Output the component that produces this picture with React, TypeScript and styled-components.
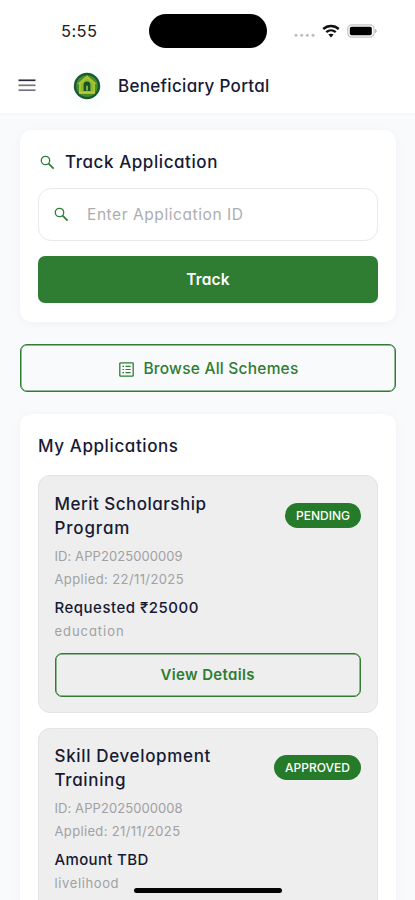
import React from "react";
import styled, { createGlobalStyle } from "styled-components";

const GREEN = "#2e7d32";
const NAVY = "#161a35";

const GlobalStyle = createGlobalStyle`
  * { box-sizing: border-box; }
  html, body { margin: 0; padding: 0; overflow: hidden; }
  body { font-family: Inter, "Open Sans", sans-serif; font-feature-settings: "cv11"; }
  button, input { font: inherit; font-feature-settings: inherit; }
`;

const Screen = styled.div`
  position: relative;
  width: 415px;
  height: 900px;
  overflow: hidden;
  background: #f9fafc;
  display: flex;
  flex-direction: column;
`;

const StatusBar = styled.div`
  flex: none;
  height: 58px;
  background: #fff;
  display: grid;
  grid-template-columns: 149px 118px 1fr;
  align-items: center;
  padding-top: 3px;
`;

const Clock = styled.div`
  padding-left: 61px;
  font-size: 16.5px;
  line-height: 20px;
  letter-spacing: 0.4px;
  color: #1c1c1e;
`;

const Island = styled.div`
  height: 34px;
  border-radius: 17px;
  background: #000;
`;

const StatusIcons = styled.div`
  display: flex;
  align-items: center;
  padding-left: 27px;
  gap: 7px;
  height: 20px;
`;

const Header = styled.header`
  flex: none;
  height: 55px;
  background: #fff;
  display: flex;
  align-items: center;
  padding-left: 18px;
  box-shadow: 0 1px 4px rgba(30, 40, 80, 0.025);
`;

const MenuButton = styled.button`
  border: 0;
  background: none;
  padding: 0;
  width: 18px;
  height: 14px;
  display: flex;
  margin: 0 27px 1px 0;
`;

const LogoDisc = styled.div`
  width: 48px;
  height: 48px;
  border-radius: 50%;
  background: #fcfefd;
  display: grid;
  place-items: center;
  margin-right: 7px;
`;

const Label = styled.span<{ $size: number; $weight?: number; $track?: number; $line?: number; $color?: string }>`
  display: block;
  white-space: nowrap;
  font-size: ${(p) => p.$size}px;
  font-weight: ${(p) => p.$weight ?? 500};
  letter-spacing: ${(p) => p.$track ?? 0}px;
  line-height: ${(p) => p.$line ?? 24}px;
  color: ${(p) => p.$color ?? NAVY};
`;

const Content = styled.main`
  flex: none;
  padding: 17px 19px 0 20px;
  display: flex;
  flex-direction: column;
  gap: 22px;
`;

const Card = styled.section<{ $height: number }>`
  height: ${(p) => p.$height}px;
  background: #fff;
  border-radius: 12px;
  padding: 20px 18px 0;
  box-shadow: 0 1px 9px rgba(40, 50, 80, 0.045);
`;

const CardHeading = styled.div`
  display: flex;
  align-items: center;
  gap: 10px;
  height: 24px;
  padding-left: 2px;
`;

const SearchField = styled.div`
  margin-top: 14px;
  height: 53px;
  border: 1px solid #e8e9eb;
  border-radius: 13px;
  display: flex;
  align-items: center;
  padding-left: 15px;
  gap: 18px;
`;

const FilledButton = styled.button`
  margin-top: 15px;
  width: 100%;
  height: 47px;
  border: 0;
  border-radius: 7px;
  background: ${GREEN};
  display: grid;
  place-items: center;
  padding: 0;
`;

const OutlineButton = styled.button<{ $height: number; $nudge?: number }>`
  width: 100%;
  height: ${(p) => p.$height}px;
  border: 1.5px solid ${GREEN};
  box-shadow: inset 0 0 0 0.5px ${GREEN};
  border-radius: 7px;
  background: transparent;
  display: flex;
  align-items: center;
  justify-content: center;
  gap: 9px;
  padding: ${(p) => p.$nudge ?? 0}px 0 0 ${(p) => p.$nudge ?? 0}px;
`;

const Applications = styled.div`
  margin-top: 17px;
  display: flex;
  flex-direction: column;
  gap: 15px;
`;

const AppCard = styled.article`
  height: 238px;
  border: 1px solid #e3e3e4;
  border-radius: 12px;
  background: #eee;
  padding: 17px 16px 0 15.5px;

  & + & {
    padding-top: 16px;
  }
`;

const AppTop = styled.div`
  display: flex;
  justify-content: space-between;
  align-items: center;
  height: 47px;
`;

const Badge = styled.div<{ $width: number }>`
  width: ${(p) => p.$width}px;
  height: 25px;
  border-radius: 13px;
  background: #257b29;
  display: grid;
  place-items: center;
  margin-bottom: 2px;
`;

const Meta = styled.div`
  margin: 5px 0 14px;
  display: flex;
  flex-direction: column;
`;

const HomeIndicator = styled.div`
  position: absolute;
  left: 134px;
  top: 888px;
  width: 148px;
  height: 5px;
  border-radius: 3px;
  background: #050505;
`;

const SearchIcon = () => (
  <svg width="15" height="15" viewBox="0 0 15 15" fill="none" stroke={GREEN}>
    <circle cx="5.5" cy="5.5" r="4.2" strokeWidth="1.3" />
    <path d="M8.6 8.6 13.6 13.6" strokeWidth="1.7" />
  </svg>
);

const MenuIcon = () => (
  <svg width="18" height="14" viewBox="0 0 18 14">
    <path d="M0.5 2.3H17.5" stroke="#292b3d" strokeWidth="1.7" />
    <path d="M0.5 7.3H17.5" stroke="#74757e" strokeWidth="1.7" />
    <path d="M0.5 12.2H17.5" stroke="#74757e" strokeWidth="1.7" />
  </svg>
);

const Logo = () => (
  <svg width="28" height="28" viewBox="0 0 28 28">
    <circle cx="14" cy="14" r="13.2" fill="#155b35" />
    <circle cx="14" cy="14" r="10.8" fill="#4c8b2c" />
    <path d="M14 3.3 24 12H22V21.5H6V12H4Z" fill="#a6c52e" />
    <path d="M14 6.5 20 12V19.5H8V12Z" fill="#8fb92d" />
    <path d="M10.6 19V12.9a3.4 3.4 0 0 1 6.8 0V19Z" fill="#125432" />
    <path d="M13.2 18.5V14.2a.8.8 0 0 1 1.6 0V18.5Z" fill="#a6c52e" />
    <path d="M6 21H22" stroke="#c9d03c" strokeWidth="1.2" />
  </svg>
);

const SchemeIcon = () => (
  <svg width="15" height="15" viewBox="0 0 15 15" fill="none" stroke={GREEN}>
    <rect x="0.8" y="0.8" width="13.4" height="13.4" rx="0.8" strokeWidth="1.3" />
    <path d="M3.4 4.3H5M3.4 7.5H5M3.4 10.7H5M6.5 4.3H11.6M6.5 7.5H11.6M6.5 10.7H11.6" strokeWidth="1.2" />
  </svg>
);

const Dots = () => (
  <svg width="21" height="20" viewBox="0 0 21 20" fill="#bdbdbd">
    {[2, 7.7, 13.3, 19].map((x) => (
      <circle key={x} cx={x} cy="14.2" r="1.5" />
    ))}
  </svg>
);

const Wifi = () => (
  <svg width="18" height="14" viewBox="0 0 18 14" fill="none" stroke="#111" strokeWidth="2.4">
    <path d="M1.2 5C5.6.9 12.4.9 16.8 5" />
    <path d="M4.3 8.2C7 5.8 11 5.8 13.7 8.2" />
    <path d="M6.4 10.6C7.9 9.3 10.1 9.3 11.6 10.6L9 13.4Z" fill="#111" stroke="none" />
  </svg>
);

const Battery = () => (
  <svg width="30" height="14" viewBox="0 0 30 14">
    <rect x="0.8" y="0.8" width="26.2" height="12.4" rx="4" fill="#fff" stroke="#c4c4c4" strokeWidth="1.2" />
    <rect x="2.8" y="2.8" width="22" height="8.4" rx="1.8" fill="#000" />
    <path d="M28.2 5v4c.9-.3 1.4-1 1.4-2s-.5-1.7-1.4-2Z" fill="#aaa" />
  </svg>
);

type Line = { text: string; track: number };
type Application = {
  title: Line[];
  status: Line & { width: number };
  id: Line;
  applied: Line;
  amount: Line;
  category: Line;
  action?: string;
};

const applications: Application[] = [
  {
    title: [{ text: "Merit Scholarship", track: 0.48 }, { text: "Program", track: 0.85 }],
    status: { text: "PENDING", track: 0, width: 76 },
    id: { text: "ID: APP2025000009", track: 0.08 },
    applied: { text: "Applied: 22/11/2025", track: 0.4 },
    amount: { text: "Requested ₹25000", track: 0.5 },
    category: { text: "education", track: 0.95 },
    action: "View Details",
  },
  {
    title: [{ text: "Skill Development", track: 0.65 }, { text: "Training", track: 0.65 }],
    status: { text: "APPROVED", track: 0, width: 87 },
    id: { text: "ID: APP2025000008", track: 0.08 },
    applied: { text: "Applied: 21/11/2025", track: 0.35 },
    amount: { text: "Amount TBD", track: 0.35 },
    category: { text: "livelihood", track: 0.62 },
  },
];

const ApplicationItem = ({ item }: { item: Application }) => (
  <AppCard>
    <AppTop>
      <div>
        {item.title.map((l) => (
          <Label key={l.text} $size={17} $line={23.5} $track={l.track}>{l.text}</Label>
        ))}
      </div>
      <Badge $width={item.status.width}>
        <Label $size={12} $line={16} $color="#fff" $track={item.status.track}>{item.status.text}</Label>
      </Badge>
    </AppTop>
    <Meta>
      <Label $size={13} $weight={400} $line={23} $color="#a0a1a3" $track={item.id.track}>{item.id.text}</Label>
      <Label $size={13} $weight={400} $line={23} $color="#a0a1a3" $track={item.applied.track}>{item.applied.text}</Label>
      <Label $size={15} $weight={450} $line={33} $track={item.amount.track}>{item.amount.text}</Label>
      <Label $size={13} $weight={400} $line={15} $color="#a0a1a3" $track={item.category.track}>{item.category.text}</Label>
    </Meta>
    {item.action && (
      <OutlineButton $height={44}>
        <Label $size={15} $weight={600} $color={GREEN} $track={0.35}>{item.action}</Label>
      </OutlineButton>
    )}
  </AppCard>
);

export default function App() {
  return (
    <Screen>
      <GlobalStyle />
      <StatusBar>
        <Clock>5:55</Clock>
        <Island />
        <StatusIcons>
          <Dots />
          <Wifi />
          <Battery />
        </StatusIcons>
      </StatusBar>
      <Header>
        <MenuButton aria-label="Menu"><MenuIcon /></MenuButton>
        <LogoDisc><Logo /></LogoDisc>
        <Label $size={17} $track={0.3}>Beneficiary Portal</Label>
      </Header>
      <Content>
        <Card $height={192}>
          <CardHeading>
            <SearchIcon />
            <Label $size={17} $track={0.57}>Track Application</Label>
          </CardHeading>
          <SearchField>
            <SearchIcon />
            <Label $size={15.5} $weight={400} $color="#adadb0" $track={0.57}>Enter Application ID</Label>
          </SearchField>
          <FilledButton>
            <Label $size={15.5} $weight={600} $color="#fff" $track={0.2}>Track</Label>
          </FilledButton>
        </Card>
        <OutlineButton $height={48} $nudge={2}>
          <SchemeIcon />
          <Label $size={15.5} $weight={550} $color={GREEN} $track={0.23}>Browse All Schemes</Label>
        </OutlineButton>
        <Card $height={580}>
          <Label $size={17} $track={0.6}>My Applications</Label>
          <Applications>
            {applications.map((a) => (
              <ApplicationItem key={a.id.text} item={a} />
            ))}
          </Applications>
        </Card>
      </Content>
      <HomeIndicator />
    </Screen>
  );
}
